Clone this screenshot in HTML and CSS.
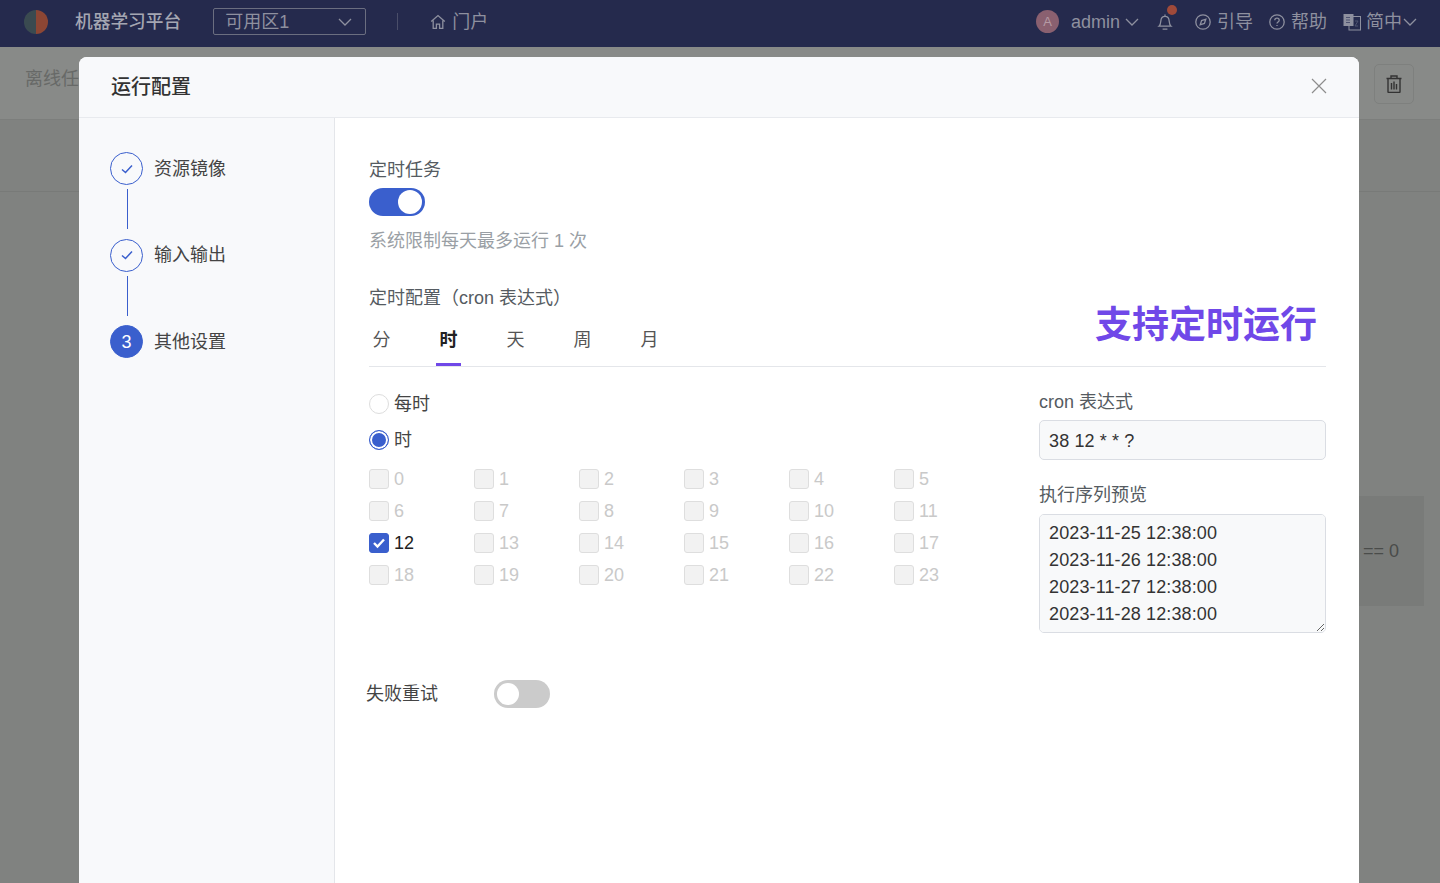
FILE: index.html
```html
<!DOCTYPE html>
<html lang="zh-CN">

<head>
    <meta charset="UTF-8">
    <meta name="viewport" content="width=device-width, initial-scale=1.0">
    <title>运行配置</title>
    <link rel="stylesheet" href="styles.css">
</head>

<body>
    <!-- Top bar -->
    <header class="topbar">
        <div class="logo"></div>
        <div class="brand">机器学习平台</div>
        <div class="zone">
            <span>可用区1</span>
            <svg class="chevron chevron-zone" viewBox="0 0 14 8"><path d="M1 1l6 6 6-6"/></svg>
        </div>
        <div class="divider"></div>
        <a class="nav-link nav-home">
            <svg class="nav-icon" viewBox="0 0 16 16"><path d="M1.2 7.6L8 1.6l6.8 6M3.2 6.4v8h3.2v-4.2h3.2v4.2h3.2v-8"/></svg>
            <span>门户</span>
        </a>
        <div class="topbar-right">
            <div class="avatar">A</div>
            <span class="nav-link user-name">admin</span>
            <svg class="chevron chevron-user" viewBox="0 0 14 8"><path d="M1 1l6 6 6-6"/></svg>
            <div class="bell">
                <svg class="nav-icon" viewBox="0 0 16 18"><path d="M2 13.2c1.400-1.200 1.600-2.600 1.800-5C4 5.400 5.600 3.400 8 3.400s4 2 4.200 4.800c.2 2.400.4 3.800 1.800 5zM8 1.400v2M5.600 16.200h4.800"/></svg>
                <i class="bell-dot"></i>
            </div>
            <a class="nav-link nav-guide">
                <svg class="nav-icon" viewBox="0 0 16 16"><circle cx="8" cy="8" r="7.200"/><path d="M10.800 5.200L9.400 9.400 5.200 10.800 6.600 6.600z"/></svg>
                <span>引导</span>
            </a>
            <a class="nav-link nav-help">
                <svg class="nav-icon" viewBox="0 0 16 16"><circle cx="8" cy="8" r="7.200"/><path d="M5.800 6.200C5.800 5 6.800 4.200 8 4.200s2.200.8 2.200 2c0 1.800-2.200 1.800-2.200 3.400M8 11v1"/></svg>
                <span>帮助</span>
            </a>
            <a class="nav-link nav-lang">
                <svg class="lang-icon" viewBox="0 0 18 18"><rect class="lang-back" x="6" y="3.500" width="11.500" height="13.500"/><rect class="lang-front" x="0.500" y="1" width="10" height="12"/><path class="lang-mark" d="M3 4.500h4M3 7h4M3 9.500h4M12 8h3l-3 5h3"/></svg>
                <span>简中</span>
            </a>
            <svg class="chevron chevron-lang" viewBox="0 0 14 8"><path d="M1 1l6 6 6-6"/></svg>
        </div>
    </header>

    <!-- Page behind the dialog -->
    <div class="page-head">
        <div class="page-title">离线任务</div>
        <button class="trash-button">
            <svg viewBox="0 0 16 18"><path d="M.5 3.500h15M5 3.500V1h6v2.500M2 3.500v13.200c0 .4.300.8.800.8h10.400c.5 0 .8-.4.800-.8V3.500M5.500 8v6.500M8 6.500v8M10.500 9v5.500"/></svg>
        </button>
    </div>
    <div class="page-band"></div>
    <div class="page-rule">== 0</div>

    <!-- Dialog -->
    <div class="modal">
        <div class="modal-head">
            <h2 class="modal-title">运行配置</h2>
            <svg class="modal-close" viewBox="0 0 16 16"><path d="M1 1l14 14M15 1L1 15"/></svg>
        </div>
        <div class="modal-body">
            <aside class="steps">
                <div class="step">
                    <div class="step-dot">
                        <svg viewBox="0 0 14 12"><path d="M2 6.500l3.500 3L12 2.500"/></svg>
                    </div>
                    <span>资源镜像</span>
                </div>
                <div class="step-line"></div>
                <div class="step">
                    <div class="step-dot">
                        <svg viewBox="0 0 14 12"><path d="M2 6.500l3.500 3L12 2.500"/></svg>
                    </div>
                    <span>输入输出</span>
                </div>
                <div class="step-line"></div>
                <div class="step">
                    <div class="step-dot step-current">3</div>
                    <span>其他设置</span>
                </div>
            </aside>

            <main class="form">
                <div class="callout">支持定时运行</div>

                <div class="field-label">定时任务</div>
                <div class="switch switch-on"><i></i></div>
                <div class="hint">系统限制每天最多运行 1 次</div>

                <div class="field-label cron-title">定时配置（cron 表达式）</div>
                <div class="tabs">
                    <div class="tab">分</div>
                    <div class="tab tab-active">时</div>
                    <div class="tab">天</div>
                    <div class="tab">周</div>
                    <div class="tab">月</div>
                </div>

                <div class="cron">
                    <div class="cron-left">
                        <label class="radio-row"><i class="radio"></i>每时</label>
                        <label class="radio-row"><i class="radio radio-on"></i>时</label>
                        <div class="hours">
                            <div class="hour"><i class="box"></i>0</div>
                            <div class="hour"><i class="box"></i>1</div>
                            <div class="hour"><i class="box"></i>2</div>
                            <div class="hour"><i class="box"></i>3</div>
                            <div class="hour"><i class="box"></i>4</div>
                            <div class="hour"><i class="box"></i>5</div>
                            <div class="hour"><i class="box"></i>6</div>
                            <div class="hour"><i class="box"></i>7</div>
                            <div class="hour"><i class="box"></i>8</div>
                            <div class="hour"><i class="box"></i>9</div>
                            <div class="hour"><i class="box"></i>10</div>
                            <div class="hour"><i class="box"></i>11</div>
                            <div class="hour hour-on">
                                <i class="box"><svg viewBox="0 0 14 12"><path d="M2 6l3.500 3.500L12 2.500"/></svg></i>12
                            </div>
                            <div class="hour"><i class="box"></i>13</div>
                            <div class="hour"><i class="box"></i>14</div>
                            <div class="hour"><i class="box"></i>15</div>
                            <div class="hour"><i class="box"></i>16</div>
                            <div class="hour"><i class="box"></i>17</div>
                            <div class="hour"><i class="box"></i>18</div>
                            <div class="hour"><i class="box"></i>19</div>
                            <div class="hour"><i class="box"></i>20</div>
                            <div class="hour"><i class="box"></i>21</div>
                            <div class="hour"><i class="box"></i>22</div>
                            <div class="hour"><i class="box"></i>23</div>
                        </div>
                    </div>
                    <div class="cron-right">
                        <div class="side-label">cron 表达式</div>
                        <input class="cron-input" type="text" value="38 12 * * ?">
                        <div class="side-label preview-label">执行序列预览</div>
                        <textarea class="cron-preview">2023-11-25 12:38:00
2023-11-26 12:38:00
2023-11-27 12:38:00
2023-11-28 12:38:00</textarea>
                    </div>
                </div>

                <div class="retry">
                    <span class="retry-label">失败重试</span>
                    <div class="switch"><i></i></div>
                </div>
            </main>
        </div>
    </div>
</body>

</html>
```

FILE: styles.css
```css
* {
    box-sizing: border-box;
}

body {
    position: relative;
    height: 883px;
    margin: 0;
    overflow: hidden;
    background-color: #808280;
    color: #555;
    font-family: "Liberation Sans", "Noto Sans CJK SC", sans-serif;
    font-size: 18px;
    line-height: 24px;
}

/* Top bar */
.topbar {
    display: flex;
    align-items: center;
    height: 47px;
    padding: 0 23px 4px 24px;
    background-color: #252a4d;
    color: #8e909f;
}

.logo {
    width: 24px;
    height: 24px;
    border-radius: 50%;
    background: linear-gradient(90deg, #3a4a50 50%, #8c4634 50%);
}

.brand {
    margin-left: 27px;
    color: #a4a6b2;
    font-size: 17.700px;
    font-weight: 500;
}

.zone {
    display: flex;
    align-items: center;
    justify-content: space-between;
    width: 153px;
    height: 27px;
    margin-left: 32px;
    padding: 0 13px 0 11px;
    border: 1px solid #6b6e80;
    border-radius: 2px;
}

.chevron {
    fill: none;
    stroke: #8e909f;
    stroke-width: 1.3;
}

.chevron-zone,
.chevron-user,
.chevron-lang {
    width: 14px;
    height: 8px;
}

.divider {
    width: 1px;
    height: 17px;
    margin-left: 31px;
    background-color: #4a4e69;
}

.nav-link {
    display: flex;
    align-items: center;
}

.nav-icon {
    width: 16px;
    height: 16px;
    fill: none;
    stroke: #8e909f;
    stroke-width: 1.3;
}

.nav-home {
    gap: 6px;
    margin-left: 32px;
}

.topbar-right {
    display: flex;
    align-items: center;
    margin-left: auto;
}

.avatar {
    width: 23px;
    height: 23px;
    border-radius: 50%;
    background-color: #8a6070;
    color: #b59aa4;
    font-size: 13px;
    line-height: 23px;
    text-align: center;
}

.user-name {
    margin-left: 12px;
}

.chevron-user {
    margin-left: 5px;
}

.bell {
    position: relative;
    width: 16px;
    height: 18px;
    margin-left: 18px;
}

.bell .nav-icon {
    height: 18px;
}

.bell-dot {
    position: absolute;
    top: -8px;
    left: 10px;
    width: 10px;
    height: 10px;
    border-radius: 50%;
    background-color: #a04a3a;
}

.nav-guide {
    gap: 6px;
    margin-left: 22px;
}

.nav-help {
    gap: 6px;
    margin-left: 16px;
}

.nav-lang {
    gap: 5px;
    margin-left: 16px;
}

.lang-icon {
    width: 18px;
    height: 18px;
}

.lang-back {
    fill: none;
    stroke: #8e909f;
}

.lang-front {
    fill: #8e909f;
    stroke: none;
}

.lang-mark {
    fill: none;
    stroke: #4d5270;
    stroke-width: 1;
}

.chevron-lang {
    margin-left: 1px;
}

/* Page behind the dialog */
.page-head {
    display: flex;
    align-items: center;
    justify-content: space-between;
    height: 73px;
    padding: 0 26px 0 25px;
    border-bottom: 1px solid #7c7e7c;
    background-color: #888a88;
    color: #676967;
}

.page-title {
    margin-bottom: 8px;
}

.trash-button {
    display: flex;
    align-items: center;
    justify-content: center;
    width: 40px;
    height: 40px;
    margin-top: 1px;
    padding: 0;
    border: 1px solid #7e807e;
    border-radius: 5px;
    background: none;
}

.trash-button svg {
    width: 16px;
    height: 18px;
    fill: none;
    stroke: #333;
    stroke-width: 1.4;
}

.page-band {
    height: 72px;
    border-bottom: 1px solid #787a78;
}

.page-rule {
    position: absolute;
    top: 496px;
    left: 1359px;
    width: 65px;
    height: 110px;
    padding-left: 4px;
    background-color: #797b79;
    color: #4a4c4a;
    line-height: 110px;
}

/* Dialog */
.modal {
    position: absolute;
    top: 57px;
    left: 79px;
    display: flex;
    flex-direction: column;
    width: 1280px;
    height: 826px;
    border-radius: 8px 8px 0 0;
    background-color: #fff;
}

.modal-head {
    display: flex;
    align-items: center;
    justify-content: space-between;
    flex: none;
    height: 61px;
    padding: 0 32px;
    border-bottom: 1px solid #e8eaee;
    border-radius: 8px 8px 0 0;
    background-color: #f8f9fb;
}

.modal-title {
    margin: 0;
    color: #333;
    font-size: 20px;
    font-weight: 500;
}

.modal-close {
    width: 16px;
    height: 16px;
    margin-bottom: 2px;
    fill: none;
    stroke: #8d8d8d;
    stroke-width: 1.2;
}

.modal-body {
    display: flex;
    flex: 1;
}

.steps {
    flex: none;
    width: 256px;
    padding: 34px 0 0 31px;
    border-right: 1px solid #e4e6ea;
    background-color: #f8f9fb;
}

.step {
    display: flex;
    align-items: center;
    gap: 11px;
    color: #444;
}

.step-dot {
    display: flex;
    align-items: center;
    justify-content: center;
    width: 33px;
    height: 33px;
    border: 1.500px solid #3a5fcd;
    border-radius: 50%;
    color: #fff;
    font-size: 18px;
}

.step-dot svg {
    width: 14px;
    height: 12px;
    fill: none;
    stroke: #3a5fcd;
    stroke-width: 1.5;
}

.step-current {
    background-color: #3a5fcd;
}

.step-line {
    width: 1.500px;
    height: 40px;
    margin: 4px 0 9.500px 16.500px;
    background-color: #3a5fcd;
}

.form {
    position: relative;
    flex: 1;
    padding: 40px 33px 0 34px;
}

.callout {
    position: absolute;
    top: 183px;
    right: 42px;
    color: #7048e8;
    font-size: 37px;
    font-weight: 700;
    line-height: 50px;
}

.field-label {
    color: #555b61;
}

.switch {
    position: relative;
    width: 56px;
    height: 28px;
    border-radius: 14px;
    background-color: #cbcbcb;
}

.switch i {
    position: absolute;
    top: 3px;
    left: 3px;
    width: 22px;
    height: 22px;
    border-radius: 50%;
    background-color: #fff;
}

.switch-on {
    margin-top: 6px;
    background-color: #3a5fcd;
}

.switch-on i {
    left: auto;
    right: 3px;
    width: 24px;
    height: 24px;
    top: 2px;
}

.hint {
    margin-top: 13px;
    color: #9a9fa5;
}

.cron-title {
    margin-top: 33px;
}

.tabs {
    display: flex;
    gap: 42px;
    padding-top: 18px;
    border-bottom: 1px solid #e4e6ea;
}

.tab {
    width: 25px;
    height: 38px;
    color: #555;
    text-align: center;
}

.tab-active {
    border-bottom: 3px solid #7048e8;
    color: #222;
    font-weight: 700;
}

.cron {
    display: flex;
    justify-content: space-between;
}

.cron-left {
    padding-top: 25px;
}

.radio-row {
    display: flex;
    align-items: center;
    gap: 5px;
    height: 24px;
    margin-bottom: 12px;
    color: #444;
}

.radio {
    width: 20px;
    height: 20px;
    margin-top: -1px;
    border: 1px solid #ddd;
    border-radius: 50%;
    background-color: #fff;
}

.radio-on {
    border-color: #3a5fcd;
    background-color: #3a5fcd;
    box-shadow: inset 0 0 0 2px #fff;
}

.hours {
    display: grid;
    grid-template-columns: repeat(6, 105px);
    grid-auto-rows: 20px;
    row-gap: 12px;
    margin-top: 17px;
}

.hour {
    display: flex;
    align-items: center;
    gap: 5px;
    color: #c9c9c9;
}

.box {
    display: flex;
    align-items: center;
    justify-content: center;
    width: 20px;
    height: 20px;
    border: 1px solid #dedede;
    border-radius: 3px;
    background-color: #f2f2f2;
}

.hour-on {
    color: #222;
}

.hour-on .box {
    border-color: #3a5fcd;
    background-color: #3a5fcd;
}

.box svg {
    width: 14px;
    height: 12px;
    fill: none;
    stroke: #fff;
    stroke-width: 2.400;
}

.cron-right {
    display: flex;
    flex-direction: column;
    width: 287px;
    padding-top: 23px;
}

.side-label {
    margin-bottom: 6px;
    color: #555b61;
}

.preview-label {
    margin-top: 23px;
    margin-bottom: 7px;
}

.cron-input,
.cron-preview {
    display: block;
    width: 287px;
    border: 1.500px solid #dadde3;
    border-radius: 5px;
    background-color: #f8f9fa;
    color: #333;
    font-family: "Liberation Sans", "Noto Sans CJK SC", sans-serif;
    font-size: 18px;
    letter-spacing: 0.120px;
}

.cron-input {
    height: 40px;
    padding: 2px 9px 0;
}

.cron-preview {
    height: 119px;
    padding: 5px 9px;
    line-height: 27px;
}

.retry {
    display: flex;
    align-items: center;
    height: 28px;
    margin: 47px 0 0 -3px;
}

.retry-label {
    width: 128px;
    color: #444;
}
```
